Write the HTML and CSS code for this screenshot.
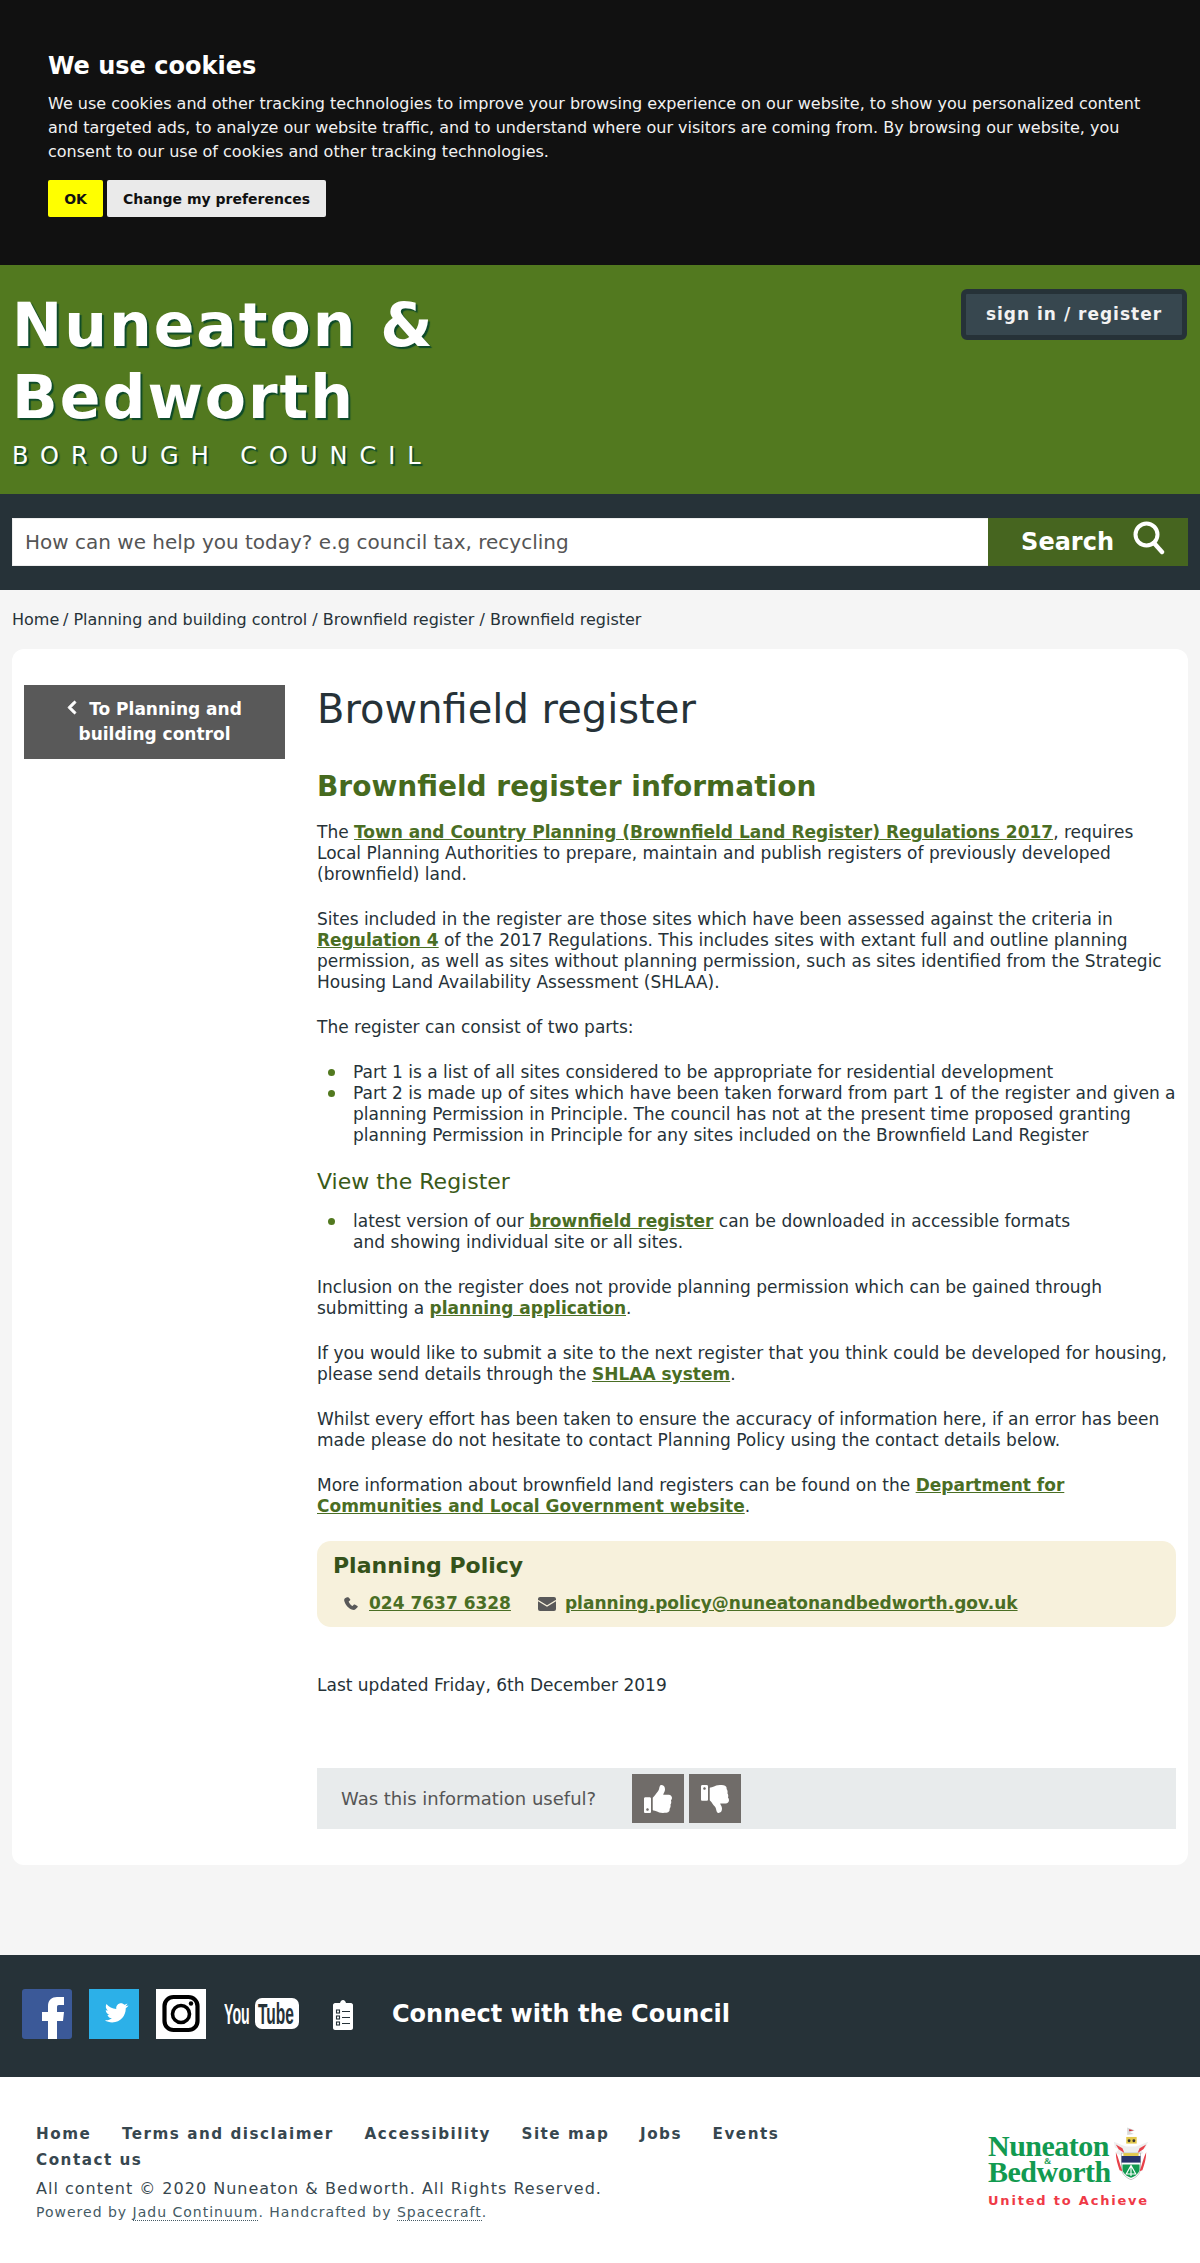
FILE: index.html
```html
<!DOCTYPE html>
<html lang="en">
<head>
<meta charset="utf-8">
<title>Brownfield register</title>
<link rel="stylesheet" href="styles.css">
</head>
<body>
<section class="cookie">
  <h2 class="cookie-title">We use cookies</h2>
  <p class="cookie-text">We use cookies and other tracking technologies to improve your browsing experience on our website, to show you personalized content and targeted ads, to analyze our website traffic, and to understand where our visitors are coming from. By browsing our website, you consent to our use of cookies and other tracking technologies.</p>
  <div class="cookie-actions">
    <button class="cookie-btn cookie-ok">OK</button>
    <button class="cookie-btn cookie-pref">Change my preferences</button>
  </div>
</section>

<header class="brand">
  <a class="brand-name">
    <span class="brand-title">Nuneaton &amp;<br>Bedworth</span>
    <span class="brand-sub">BOROUGH COUNCIL</span>
  </a>
  <a class="signin">sign in / register</a>
</header>

<form class="searchbar">
  <input class="search-input" type="text" placeholder="How can we help you today? e.g council tax, recycling">
  <button class="search-btn" type="button">Search
    <svg class="search-icon" viewBox="0 0 32 34"><circle cx="13.500" cy="13.500" r="11" fill="none" stroke="#fff" stroke-width="4"/><path d="M21 22l8 9" stroke="#fff" stroke-width="4.400" stroke-linecap="round"/></svg>
  </button>
</form>

<nav class="crumbs"><a>Home</a> / <a>Planning and building control</a> / <a>Brownfield register</a> / <a>Brownfield register</a></nav>

<main class="card">
  <aside class="side">
    <a class="back"><svg class="back-icon" viewBox="0 0 320 512"><path d="M34.520 239.030L228.870 44.690c9.370-9.370 24.570-9.370 33.940 0l22.670 22.670c9.360 9.360 9.370 24.520.04 33.900L131.490 256l154.020 154.750c9.340 9.380 9.320 24.540-.04 33.900l-22.670 22.670c-9.370 9.370-24.570 9.370-33.940 0L34.520 272.970c-9.370-9.370-9.370-24.570 0-33.940z"/></svg>To Planning and building control</a>
  </aside>
  <article class="content">
    <h1 class="page-title">Brownfield register</h1>
    <h2 class="section-title">Brownfield register information</h2>
    <p>The <a class="link">Town and Country Planning (Brownfield Land Register) Regulations 2017</a>, requires Local Planning Authorities to prepare, maintain and publish registers of previously developed (brownfield) land.</p>
    <p>Sites included in the register are those sites which have been assessed against the criteria in <a class="link">Regulation 4</a> of the 2017 Regulations. This includes sites with extant full and outline planning permission, as well as sites without planning permission, such as sites identified from the Strategic Housing Land Availability Assessment (SHLAA).</p>
    <p>The register can consist of two parts:</p>
    <ul class="list">
      <li>Part 1 is a list of all sites considered to be appropriate for residential development</li>
      <li>Part 2 is made up of sites which have been taken forward from part 1 of the register and given a planning Permission in Principle. The council has not at the present time proposed granting planning Permission in Principle for any sites included on the Brownfield Land Register</li>
    </ul>
    <h3 class="sub-title">View the Register</h3>
    <ul class="list">
      <li>latest version of our <a class="link">brownfield register</a> can be downloaded in accessible formats<br>and showing individual site or all sites.</li>
    </ul>
    <p>Inclusion on the register does not provide planning permission which can be gained through submitting a <a class="link">planning application</a>.</p>
    <p>If you would like to submit a site to the next register that you think could be developed for housing, please send details through the <a class="link">SHLAA system</a>.</p>
    <p>Whilst every effort has been taken to ensure the accuracy of information here, if an error has been made please do not hesitate to contact Planning Policy using the contact details below.</p>
    <p>More information about brownfield land registers can be found on the <a class="link">Department for Communities and Local Government website</a>.</p>

    <section class="contact">
      <h3 class="contact-title">Planning Policy</h3>
      <div class="contact-row">
        <svg class="contact-icon phone" viewBox="0 0 14 13"><path d="M3 .3L1 1.300C.2 1.800 0 2.800.3 4 1.500 8 4.500 11.500 8.500 12.800c1.300.4 2.500 0 3.200-.8l1.800-1.700c.4-.4.3-.9-.1-1.200L10.800 7.500c-.4-.2-.8-.1-1.100.2l-.9 1c-.3.3-.6.3-.9.1C6.600 7.900 5.400 6.300 4.800 5c-.1-.4 0-.7.3-.9l.9-.7c.3-.3.4-.7.2-1.100L4.600.6C4.200.1 3.500 0 3 .3z"/></svg>
        <a class="link contact-link">024 7637 6328</a>
        <svg class="mail" viewBox="0 0 18 14"><rect width="18" height="14" rx="2" fill="#595959"/><path d="M0 3.500l9 5.500 9-5.500" fill="none" stroke="#f7f1dc" stroke-width="1.400"/></svg>
        <a class="link contact-link">planning.policy@nuneatonandbedworth.gov.uk</a>
      </div>
    </section>

    <p class="updated">Last updated Friday, 6th December 2019</p>

    <section class="useful">
      <span class="useful-text">Was this information useful?</span>
      <button class="vote" type="button" aria-label="Yes"><svg class="vote-icon" viewBox="0 0 512 512"><path d="M104 224H24c-13.255 0-24 10.745-24 24v240c0 13.255 10.745 24 24 24h80c13.255 0 24-10.745 24-24V248c0-13.255-10.745-24-24-24zM64 472c-13.255 0-24-10.745-24-24s10.745-24 24-24 24 10.745 24 24-10.745 24-24 24zM384 81.452c0 42.416-25.970 66.208-33.277 94.548h101.723c33.397 0 59.397 27.746 59.553 58.098.084 17.938-7.546 37.249-19.439 49.197l-.11.11c9.836 23.337 8.237 56.037-9.308 79.469 8.681 25.895-.069 57.704-16.382 74.757 4.298 17.598 2.244 32.575-6.148 44.632C440.202 511.587 389.616 512 346.839 512l-2.845-.001c-48.287-.017-87.806-17.598-119.560-31.725-15.957-7.099-36.821-15.887-52.651-16.178-6.540-.12-11.783-5.457-11.783-11.998v-213.770c0-3.200 1.282-6.271 3.558-8.521 39.614-39.144 56.648-80.587 89.117-113.111 14.804-14.832 20.188-37.236 25.393-58.902C282.515 39.293 291.817 0 312 0c24 0 72 8 72 81.452z"/></svg></button>
      <button class="vote" type="button" aria-label="No"><svg class="vote-icon flip" viewBox="0 0 512 512"><path d="M104 224H24c-13.255 0-24 10.745-24 24v240c0 13.255 10.745 24 24 24h80c13.255 0 24-10.745 24-24V248c0-13.255-10.745-24-24-24zM64 472c-13.255 0-24-10.745-24-24s10.745-24 24-24 24 10.745 24 24-10.745 24-24 24zM384 81.452c0 42.416-25.970 66.208-33.277 94.548h101.723c33.397 0 59.397 27.746 59.553 58.098.084 17.938-7.546 37.249-19.439 49.197l-.11.11c9.836 23.337 8.237 56.037-9.308 79.469 8.681 25.895-.069 57.704-16.382 74.757 4.298 17.598 2.244 32.575-6.148 44.632C440.202 511.587 389.616 512 346.839 512l-2.845-.001c-48.287-.017-87.806-17.598-119.560-31.725-15.957-7.099-36.821-15.887-52.651-16.178-6.540-.12-11.783-5.457-11.783-11.998v-213.770c0-3.200 1.282-6.271 3.558-8.521 39.614-39.144 56.648-80.587 89.117-113.111 14.804-14.832 20.188-37.236 25.393-58.902C282.515 39.293 291.817 0 312 0c24 0 72 8 72 81.452z"/></svg></button>
    </section>
  </article>
</main>

<section class="connect">
  <div class="connect-icons">
    <svg class="social" viewBox="0 0 50 50"><rect width="50" height="50" rx="3" fill="#3b5998"/><path d="M26 50V32h-6v-9h6v-6c0-6 4-9 9-9h7v8h-5c-2 0-2 1-2 3v4h7l-1 9h-6v18z" fill="#fff"/></svg>
    <svg class="social" viewBox="0 0 50 50"><rect width="50" height="50" fill="#2cb0e8"/><path transform="translate(7.100 3.100) scale(.81)" d="M39.500 16.400c-1.100.5-2.200.8-3.400 1 1.200-.8 2.200-1.900 2.600-3.300-1.100.7-2.400 1.200-3.700 1.500-1.100-1.200-2.600-1.900-4.300-1.900-3.300 0-5.900 2.700-5.900 6 0 .5.100.9.100 1.300-4.900-.2-9.200-2.600-12.100-6.200-.5.900-.8 1.900-.8 3 0 2.100 1 3.900 2.600 5-1 0-1.900-.3-2.700-.7v.1c0 2.900 2.100 5.300 4.800 5.900-.5.100-1 .2-1.600.2-.4 0-.8 0-1.100-.1.800 2.400 3 4.100 5.500 4.200-2 1.600-4.600 2.500-7.300 2.500-.5 0-.9 0-1.400-.1 2.600 1.700 5.700 2.700 9 2.700 10.900 0 16.800-9 16.800-16.900v-.8c1.300-.8 2.400-1.800 3.300-3z" fill="#fff"/></svg>
    <svg class="social" viewBox="0 0 50 50"><rect width="50" height="50" fill="#fff"/><rect x="8.500" y="8" width="33" height="33" rx="9" fill="none" stroke="#000" stroke-width="4.200"/><circle cx="25" cy="25" r="8.500" fill="none" stroke="#000" stroke-width="3.600"/><circle cx="35" cy="14.500" r="2.200" fill="#000"/></svg>
    <svg class="youtube" viewBox="0 0 75 31"><text class="yt-text yt-you" transform="translate(0 26) scale(.49 1)">You</text><rect x="31" y="0" width="44" height="31" rx="7" fill="#fff"/><text class="yt-text yt-tube" transform="translate(34 26) scale(.535 1)">Tube</text></svg>
    <svg class="clipboard" viewBox="0 0 20 30"><path d="M2 3h5C7.500 1 8.700 0 10 0s2.500 1 3 3h5c1 0 2 1 2 2v23c0 1-1 2-2 2H2c-1 0-2-1-2-2V5c0-1 1-2 2-2z" fill="#fff"/><g fill="none" stroke="#263238" stroke-width="1.100"><rect x="3.500" y="10" width="3" height="3"/><rect x="3.500" y="16" width="3" height="3"/><rect x="3.500" y="22" width="3" height="3"/><path d="M9 11.500h8M9 17.500h8M9 23.500h8"/></g></svg>
  </div>
  <h2 class="connect-title">Connect with the Council</h2>
</section>

<footer class="footer">
  <div class="footer-main">
    <ul class="footer-links">
      <li><a>Home</a></li><li><a>Terms and disclaimer</a></li><li><a>Accessibility</a></li><li><a>Site map</a></li><li><a>Jobs</a></li><li><a>Events</a></li><li><a>Contact us</a></li>
    </ul>
    <p class="copyright">All content © 2020 Nuneaton &amp; Bedworth. All Rights Reserved.</p>
    <p class="powered">Powered by <a class="dotted">Jadu Continuum</a>. Handcrafted by <a class="dotted">Spacecraft</a>.</p>
  </div>
  <div class="logo">
    <div class="logo-top">
      <div class="logo-words"><span class="logo-word">Nuneaton</span><span class="logo-amp">&amp;</span><span class="logo-word">Bedworth</span></div>
      <svg class="crest" viewBox="0 0 40 60">
        <path d="M16 1l8 3-5 2 4 2-7 1z" fill="#d8d8d8"/><path d="M18 3l5 1-5 1z" fill="#d2232a"/>
        <rect x="15" y="11" width="11" height="7" fill="#e3c84a"/><circle cx="18" cy="15" r="1.500" fill="#333"/><circle cx="23" cy="15" r="1.500" fill="#333"/>
        <path d="M2 16l7 3 6 2 10 0 6-2 7-3-3 7-5 1 3 4-6 3H10l-6-3 3-4-4-2z" fill="#eeeeee"/>
        <path d="M4 19l7 4 2 5-6-4zM36 19l-7 4-2 5 6-4z" fill="#e8414a"/>
        <path d="M10 28h20v16c0 6-5 10-10 12-5-2-10-6-10-12z" fill="#fff" stroke="#999" stroke-width=".6"/>
        <rect x="10" y="31" width="20" height="7" fill="#27336b"/><rect x="12" y="28" width="16" height="3" fill="#e3c84a"/>
        <path d="M11 40h18v5c0 4-5 8-9 9-4-1-9-5-9-9z" fill="#129a50"/><path d="M20 41l-5 9h10zM20 41v11" stroke="#fff" stroke-width="1.200" fill="none"/>
        <path d="M4 27c3 6 4 12 7 20l-3-1C6 40 4 34 4 27zM36 27c-3 6-4 12-7 20l3-1c2-6 4-12 4-19z" fill="#e8414a"/>
      </svg>
    </div>
    <div class="logo-tag">United to Achieve</div>
  </div>
</footer>
</body>
</html>
```

FILE: styles.css
```css
* { box-sizing: border-box; }
html, body { margin: 0; padding: 0; }
body {
  background: #f5f5f5;
  color: #263238;
  font-family: "DejaVu Sans", sans-serif;
  font-size: 16px;
  line-height: 21px;
  min-height: 100vh;
  display: flex;
  flex-direction: column;
}
p { margin: 0 0 24px; }
a { color: inherit; }

/* Cookie banner */
.cookie { background: #111; color: #fff; height: 265px; padding: 49px 48px 0; }
.cookie-title { margin: 0 0 9px; font-size: 24px; line-height: 34px; font-weight: 700; }
.cookie-text { margin: 0 0 16px; color: #f2f2f2; line-height: 24px; }
.cookie-actions { display: flex; gap: 4px; }
.cookie-btn { height: 37px; border: 0; border-radius: 2px; font: 700 14px "DejaVu Sans", sans-serif; padding: 0; color: #111; white-space: nowrap; }
.cookie-ok { background: #ff0; width: 55px; }
.cookie-pref { background: #eaeaea; width: 219px; }

/* Brand */
.brand { background: #52791f; height: 229px; display: flex; justify-content: space-between; align-items: flex-start; padding: 24px 13px 0 12px; }
.brand-name { display: block; color: #fff; }
.brand-title { display: block; font-size: 60px; line-height: 72px; font-weight: 700; letter-spacing: 2px; text-shadow: 2px 2px 1px #0d4a2a; }
.brand-sub { display: block; margin-top: 7px; font-size: 24px; line-height: 32px; letter-spacing: 12px; text-shadow: 2px 2px 1px #0d4a2a; }
.signin { width: 226px; height: 51px; background: #37474f; border: 5px solid #263238; border-radius: 6px; color: #f2f2f2; font-weight: 700; font-size: 17px; line-height: 40px; letter-spacing: 1px; text-align: center; }

/* Search */
.searchbar { background: #263238; height: 96px; padding: 24px 12px; display: flex; }
.search-input { flex: 1; height: 48px; border: 1px solid #eee; border-right: 0; padding: 0 12px; font: 20px "DejaVu Sans", sans-serif; color: #555; background: #fff; }
.search-input::placeholder { color: #555; opacity: 1; }
.search-btn { width: 200px; height: 48px; border: 0; background: #46651f; color: #fff; font: 700 24px "DejaVu Sans", sans-serif; display: flex; align-items: center; justify-content: flex-end; gap: 19px; padding: 0 23px 0 0; }
.search-icon { width: 32px; height: 34px; margin-top: -9px; }

/* Breadcrumb */
.crumbs { padding: 19px 12px 19px; font-size: 16px; line-height: 21px; color: #263238; }
.crumbs a:first-child { margin-right: -1.400px; }

/* Main card */
.card { background: #fff; margin: 0 12px; border-radius: 12px; padding: 36px 12px 36px; display: grid; grid-template-columns: 261px 1fr; column-gap: 32px; }
.back { display: block; background: #595959; color: #fff; font-weight: 700; font-size: 17px; line-height: 25px; padding: 12px 16px; text-align: center; }
.back-icon { width: 10px; height: 15px; fill: #fff; stroke: #fff; stroke-width: 30px; margin-right: 12px; vertical-align: 0; }
.content { font-size: 17px; line-height: 21px; }
.page-title { margin: 0 0 35px; font-size: 40px; line-height: 48px; font-weight: 400; }
.section-title { margin: 0 0 16px; color: #466a1e; font-size: 28px; line-height: 38px; font-weight: 700; }
.link { color: #4a6e24; font-weight: 700; text-decoration: underline; }
.list { list-style: none; margin: 0 0 24px; padding-left: 11px; }
.list li { padding-left: 25px; }
.list li::before { content: ""; display: inline-block; width: 7px; height: 7px; border-radius: 50%; background: #52791f; margin-left: -25px; margin-right: 18px; vertical-align: 2px; }
.sub-title { margin: -2px 0 15px; color: #3a5a18; font-size: 22px; line-height: 28px; font-weight: 400; }
.contact { background: #f7f1dc; border-radius: 14px; height: 86px; padding: 11px 16px; margin-bottom: 48px; }
.contact-title { margin: 0 0 13px; color: #35521a; font-size: 22px; line-height: 28px; font-weight: 700; }
.contact-row { display: flex; align-items: center; padding-left: 11px; }
.contact-icon { fill: #595959; }
.phone { width: 14px; height: 13px; margin-right: 11px; }
.mail { width: 18px; height: 14px; margin-left: 27px; margin-right: 9px; }
.updated { margin-bottom: 72px; }
.useful { background: #e8ebec; height: 61px; display: flex; align-items: center; padding-left: 24px; gap: 5px; color: #555; }
.useful-text { width: 286px; font-size: 18px; }
.vote { width: 52px; height: 49px; border: 0; padding: 0; background: #706c69; display: flex; align-items: center; justify-content: center; }
.vote-icon { width: 28px; height: 28px; fill: #fff; }
.flip { transform: scaleY(-1); }

/* Connect */
.connect { background: #263238; height: 122px; margin-top: 90px; display: flex; padding: 34px 0 0 22px; }
.connect-icons { display: flex; align-items: flex-start; }
.social { width: 50px; height: 50px; margin-right: 17px; }
.youtube { width: 75px; height: 31px; margin: 9px 34px 0 1px; }
.yt-text { font: 700 29px "Liberation Sans", sans-serif; }
.yt-you { fill: #fff; }
.yt-tube { fill: #263238; }
.clipboard { width: 20px; height: 30px; margin: 11px 39px 0 0; }
.connect-title { margin: 5px 0 0; color: #fff; font-size: 24px; line-height: 40px; font-weight: 700; }

/* Footer */
.footer { background: #fff; flex: 1; padding: 44px 50px 0 36px; display: flex; justify-content: space-between; }
.footer-main { width: 780px; color: #37474f; }
.footer-links { list-style: none; margin: 0 0 2px; padding: 0; display: flex; flex-wrap: wrap; column-gap: 30.600px; font-weight: 700; font-size: 15.200px; line-height: 26px; letter-spacing: 1.500px; }
.copyright { margin: 0; font-size: 16px; line-height: 27px; letter-spacing: 1px; }
.powered { margin: 0; font-size: 14px; line-height: 20px; letter-spacing: 1px; color: #455a64; }
.dotted { border-bottom: 1px dotted #455a64; }
.logo { width: 162px; margin-top: 5px; }
.logo-top { display: flex; justify-content: space-between; align-items: flex-end; }
.logo-words { display: flex; flex-direction: column; color: #129a50; font-family: "Liberation Serif", serif; font-weight: 700; letter-spacing: -.5px; }
.logo-word { font-size: 30px; line-height: 24px; }
.logo-amp { font-size: 9px; line-height: 6px; margin-left: 56px; height: 2px; }
.logo-tag { margin-top: 9px; color: #ef3a47; font-size: 13px; line-height: 16px; font-weight: 700; letter-spacing: 1.800px; white-space: nowrap; }
.crest { width: 38px; height: 58px; }
```
